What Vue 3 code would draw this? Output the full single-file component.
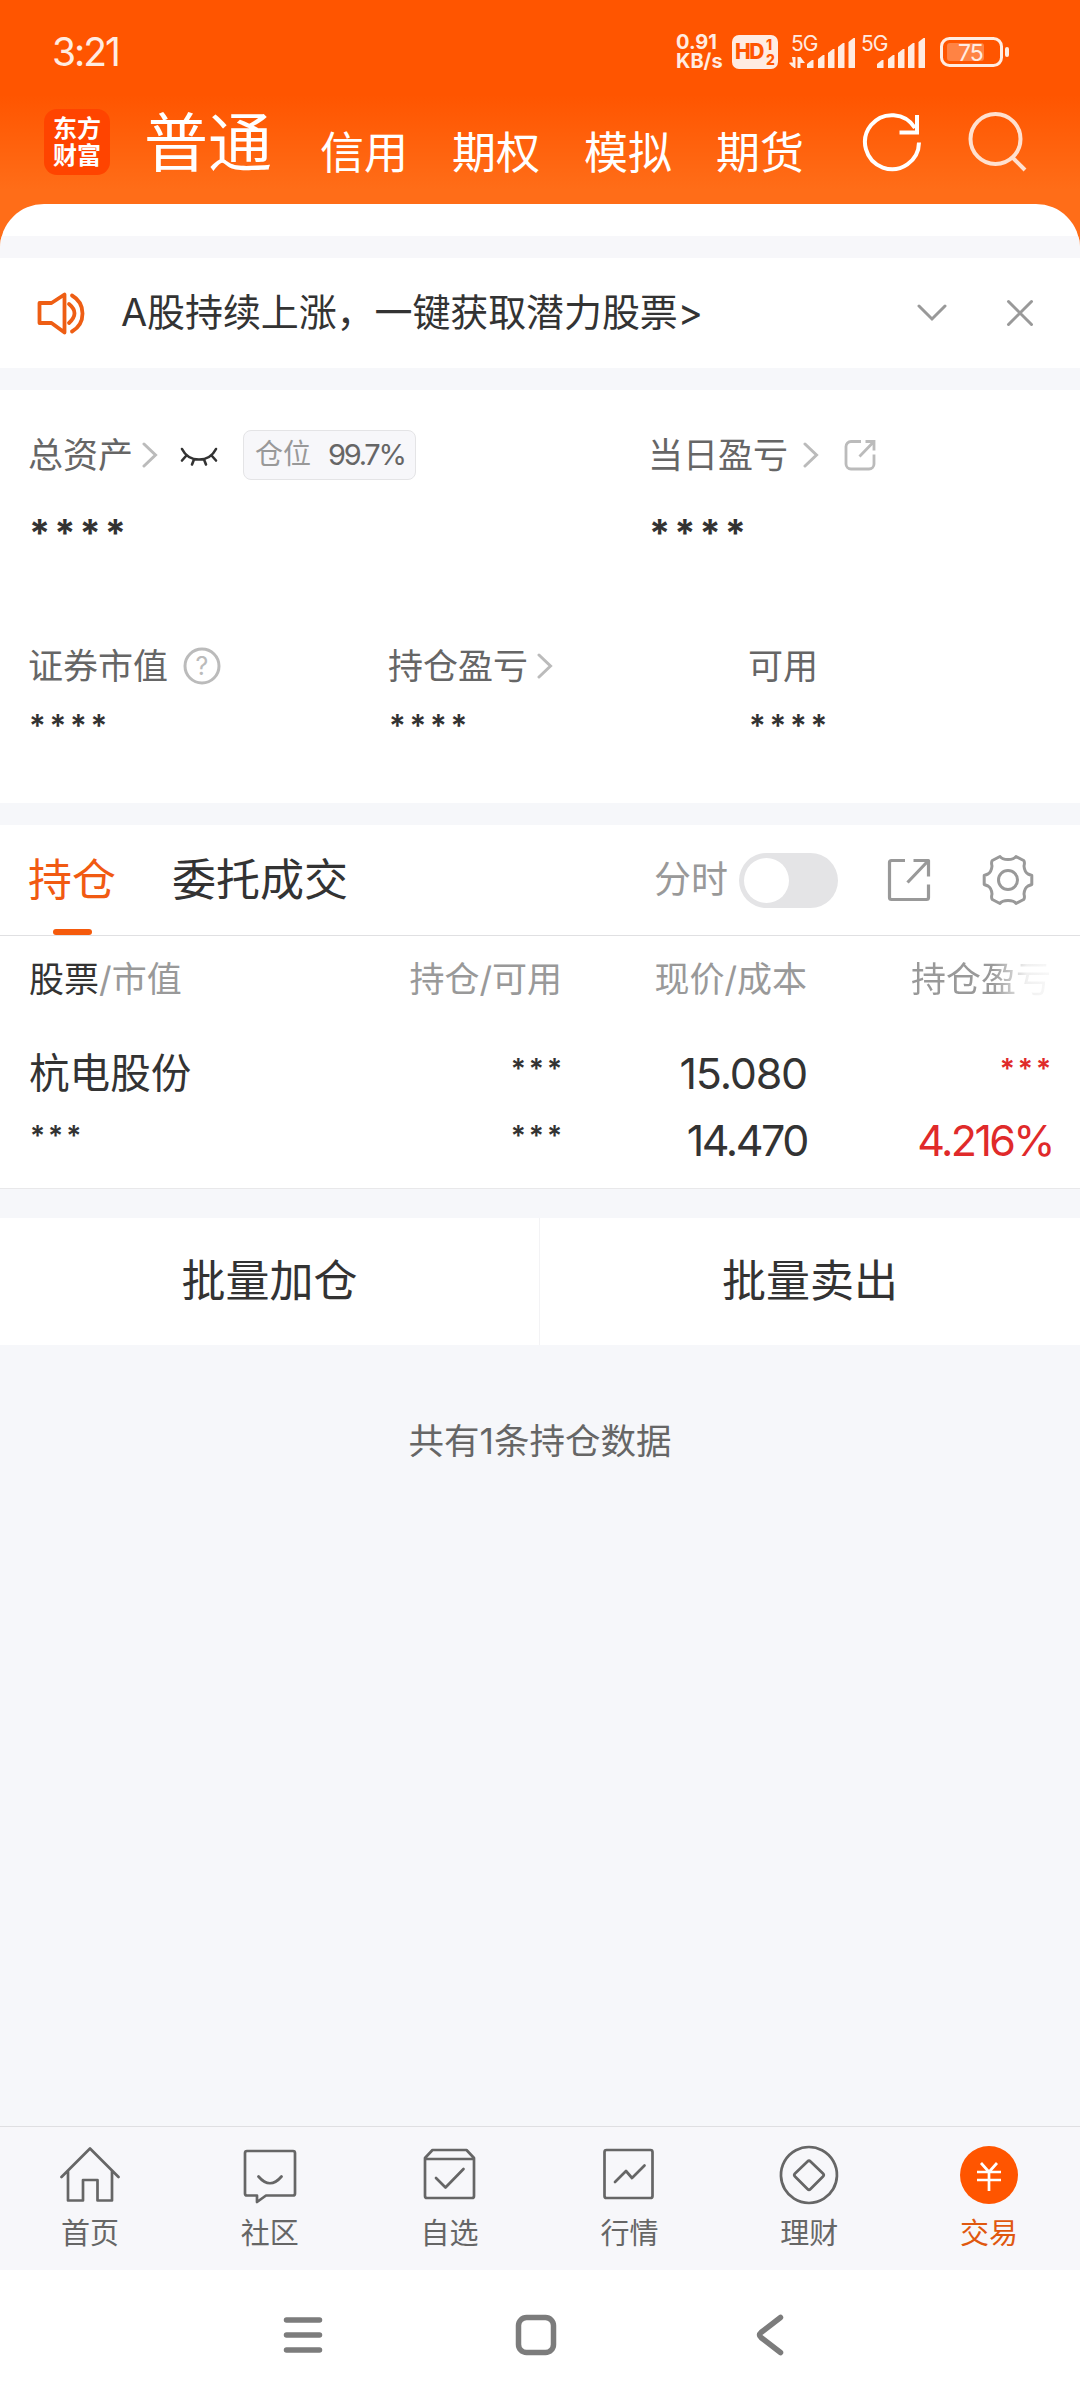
<template>
  <div class="phone">
    <header class="top">
      <div class="status">
        <span class="clock">3:21</span>
        <div class="speed">
          <span>0.91</span>
          <span>KB/s</span>
        </div>
        <div class="hd">
          <span class="hd-main">HD</span>
          <span class="hd-sub"><i>1</i><i>2</i></span>
        </div>
        <svg class="signals" width="140" height="52" viewBox="0 -8 140 52">
          <text x="2" y="17">5G</text>
          <path d="M1 28.500H5.500V34Q3 33 0 29zM3 23h3.500v11H5zM8.500 23h3L16 29H11.500V34H8.500z" />
          <path v-for="bar in bars" :key="bar.x" :d="barPath(bar.x, bar.h)" />
          <text x="72" y="17">5G</text>
          <path v-for="bar in bars" :key="bar.x" :d="barPath(bar.x + 70, bar.h)" />
        </svg>
        <svg class="battery" width="70" height="32" viewBox="0 0 70 32">
          <rect x="1.5" y="2.5" width="60" height="27" rx="8" fill="none" stroke="#ffece2" stroke-width="3" />
          <rect x="7" y="7" width="37" height="18" rx="3" fill="#ff8344" />
          <rect x="65" y="11" width="4" height="10" rx="2" fill="#ffece2" />
          <text x="18" y="24.500">75</text>
        </svg>
      </div>
      <nav class="accounts">
        <div class="logo"><span>东方</span><span>财富</span></div>
        <span class="account current">普通</span>
        <span v-for="name in accounts" :key="name" class="account">{{ name }}</span>
        <svg class="refresh" width="60" height="62" viewBox="0 0 60 62" fill="none" stroke="#fff" stroke-width="4">
          <path d="M57 31.500A27 27 0 1 1 53 17" />
          <path d="M55 4v17.500H37.500" />
        </svg>
        <svg class="search" width="62" height="62" viewBox="0 0 62 62" fill="none" stroke="#ffe0cf" stroke-width="4">
          <circle cx="28.500" cy="28" r="25" />
          <path d="M45.500 46.500L58 59" />
        </svg>
      </nav>
      <div class="sheet"><div class="sheet-gap"></div></div>
    </header>

    <section class="notice">
      <svg width="50" height="44" viewBox="0 0 50 44" fill="none" stroke="#ee5e14" stroke-width="3.800" stroke-linecap="round" stroke-linejoin="round">
        <path d="M3.500 12h12L28.500 3.500v38L15.500 32H3.500z" />
        <path d="M33 13q11 9 0 19M36 4.500c14 8 14 28 0 36" />
      </svg>
      <span class="notice-text">A股持续上涨，一键获取潜力股票&gt;</span>
      <svg class="fold" width="30" height="18" viewBox="0 0 30 18" fill="none" stroke="#999" stroke-width="3" stroke-linecap="round">
        <path d="M2 2l13 13L28 2" />
      </svg>
      <svg width="28" height="28" viewBox="0 0 28 28" fill="none" stroke="#999" stroke-width="3" stroke-linecap="round">
        <path d="M2.500 2.500l23 23M25.500 2.500l-23 23" />
      </svg>
    </section>

    <section class="assets">
      <div class="summary">
        <div class="summary-total">
          <div class="label">
            总资产
            <svg class="chevron" width="16" height="26" viewBox="0 0 16 26"><path d="M2 2l11.500 11L2 24" /></svg>
            <svg class="eye" width="38" height="20" viewBox="0 0 38 20" fill="none" stroke="#333" stroke-width="2.600" stroke-linecap="round">
              <path d="M2 2c7 14 27 14 34 0M6 9l-4 4.500M14 12.500l-2 5M24 12.500l2 5M32 9l4 4.500" />
            </svg>
            <span class="badge">仓位<b>99.7%</b></span>
          </div>
          <div class="masked big">****</div>
        </div>
        <div class="summary-day">
          <div class="label">
            当日盈亏
            <svg class="chevron wide" width="16" height="26" viewBox="0 0 16 26"><path d="M2 2l11.500 11L2 24" /></svg>
            <svg class="share" width="32" height="32" viewBox="0 0 32 32" fill="none" stroke="#bbb" stroke-width="2.800">
              <path d="M17 2.500H7a5 5 0 0 0-5 5V25a5 5 0 0 0 5 5h18a5 5 0 0 0 5-5V15.500" />
              <path d="M21.500 2.500H30v9M29.500 3L15.500 17.500" />
            </svg>
          </div>
          <div class="masked big">****</div>
        </div>
      </div>
      <div class="figures">
        <div v-for="item in figures" :key="item.label" class="figure">
          <div class="label">
            {{ item.label }}
            <svg v-if="item.mark === 'help'" class="help" width="38" height="38" viewBox="0 0 38 38">
              <circle cx="19" cy="19" r="17" fill="none" stroke="#bbb" stroke-width="3" />
              <text x="19" y="28" text-anchor="middle">?</text>
            </svg>
            <svg v-if="item.mark === 'chevron'" class="chevron" width="16" height="26" viewBox="0 0 16 26"><path d="M2 2l11.500 11L2 24" /></svg>
          </div>
          <div class="masked">****</div>
        </div>
      </div>
    </section>

    <section class="positions">
      <div class="tabs">
        <span class="tab active">持仓</span>
        <span class="tab">委托成交</span>
        <span class="tick">分时</span>
        <span class="toggle"><i></i></span>
        <svg class="export" width="44" height="44" viewBox="0 0 44 44" fill="none" stroke="#999" stroke-width="3.200">
          <path d="M18 2.500H4.500Q2.500 2.500 2.500 4.500V39.500Q2.500 41.500 4.500 41.500H39.500Q41.500 41.500 41.500 39.500V26.500" />
          <path d="M26.500 2.500h15V18.500M41 3L20.500 24.500" stroke-linejoin="round" />
        </svg>
        <svg class="gear" width="52" height="52" viewBox="0 0 52 52" fill="none" stroke="#999" stroke-width="3" stroke-linejoin="round">
          <path d="M18 2.500Q20 5.500 26 5.500T34 2.500L41.700 6.500Q43 8 42 12Q42.500 18 46 20L49.800 21.500V30.500L46 32Q42.500 34 42 40Q43 44 41.700 45.500L34 49.500Q32 46.500 26 46.500T18 49.500L10.300 45.500Q9 44 10 40Q9.500 34 6 32L2.200 30.500V21.500L6 20Q9.500 18 10 12Q9 8 10.300 6.500Z" />
          <circle cx="26" cy="26" r="9.500" />
        </svg>
      </div>
      <div class="grid grid-head">
        <span><em>股票</em>/市值</span>
        <span>持仓/可用</span>
        <span>现价/成本</span>
        <span class="fade">持仓盈亏</span>
      </div>
      <div v-for="stock in stocks" :key="stock.name" class="grid grid-row">
        <div class="cell">
          <span class="name">{{ stock.name }}</span>
          <span class="stars">***</span>
        </div>
        <div class="cell">
          <span class="stars">***</span>
          <span class="stars">***</span>
        </div>
        <div class="cell">
          <span>{{ stock.price }}</span>
          <span class="cost">{{ stock.cost }}</span>
        </div>
        <div class="cell up">
          <span class="stars">***</span>
          <span class="percent">{{ stock.profit }}</span>
        </div>
      </div>
    </section>

    <section class="batch">
      <button>批量加仓</button>
      <button>批量卖出</button>
    </section>

    <p class="count">共有{{ stocks.length }}条持仓数据</p>

    <nav class="tabbar">
      <a v-for="tab in tabbar" :key="tab.label" :class="{ on: tab.on }">
        <svg width="60" height="60" viewBox="0 0 60 60">
          <circle v-if="tab.on" cx="30" cy="30" r="29" class="disc" />
          <path :d="tab.icon" />
        </svg>
        <span>{{ tab.label }}</span>
      </a>
    </nav>

    <footer class="system">
      <svg width="40" height="42" viewBox="0 0 40 42"><path d="M3.500 6h33M3.500 21h33M3.500 36h33" /></svg>
      <svg width="42" height="42" viewBox="0 0 42 42"><rect x="3.500" y="3.500" width="35" height="35" rx="8" /></svg>
      <svg width="28" height="42" viewBox="0 0 28 42"><path d="M24.500 3.500L5 18.500Q2 21 5 23.500L24.500 38.500" /></svg>
    </footer>
  </div>
</template>

<script setup>
const accounts = ["信用", "期权", "模拟", "期货"];

const bars = [
  { x: 18, h: 8 },
  { x: 29, h: 13 },
  { x: 39, h: 19 },
  { x: 49, h: 25 },
  { x: 59.5, h: 30 },
];

const barPath = (x, h) => `M${x} 34V${38 - h}l5-4h1.500V34z`;

const figures = [
  { label: "证券市值", mark: "help" },
  { label: "持仓盈亏", mark: "chevron" },
  { label: "可用" },
];

const stocks = [
  { name: "杭电股份", price: "15.080", cost: "14.470", profit: "4.216%" },
];

const tabbar = [
  {
    label: "首页",
    icon: "M1.500 32L30 3.500L58.500 32M8 26V55.500H23V35H37.500V55.500H52V26",
  },
  {
    label: "社区",
    icon: "M7 6H53Q55 6 55 8V48.500Q55 50.500 53 50.500H26L17 57V50.500H7Q5 50.500 5 48.500V8Q5 6 7 6M18.500 31.500Q30 45 41.500 31.500",
  },
  {
    label: "自选",
    icon: "M5 13L12.500 5H46.500L54 13V51Q54 53 52 53H7Q5 53 5 51ZM5 14H54M16 33L25.500 42.500L43.500 24",
  },
  {
    label: "行情",
    icon: "M7.500 5H51.500Q53.500 5 53.500 7V51Q53.500 53 51.500 53H7.500Q5.500 53 5.500 51V7Q5.500 5 7.500 5M16 37L27 26L33 33L45.500 20.500",
  },
  {
    label: "理财",
    icon: "M30 2A28 28 0 1 1 29.900 2ZM28.500 16.500L16 28.500Q14.500 30 16 31.500L28.500 44Q30 45.500 31.500 44L44 31.500Q45.500 30 44 28.500L31.500 16.500Q30 15 28.500 16.500",
  },
  {
    label: "交易",
    icon: "M22 18L30 27L38 18M18 27H42M18 35H42M30 27V46",
    on: true,
  },
];
</script>

<style>
body {
  background: #f6f7fa;
}
</style>

<style scoped>
.phone {
  display: flex;
  flex-direction: column;
  width: 1080px;
  height: 2400px;
  background: #f6f7fa;
  color: #333;
  font-family: Inter, "Noto Sans CJK SC", sans-serif;
  line-height: 1.2;
  overflow: hidden;
}

svg {
  display: block;
  flex: none;
}

/* Header */
.top {
  height: 258px;
  background: linear-gradient(#ff5500 95px, #ff6d18 190px);
}

.status {
  display: flex;
  align-items: center;
  height: 104px;
  padding: 0 70px 0 52px;
  color: #ffece2;
}

.clock {
  flex: 1;
  font-size: 39px;
  letter-spacing: -2px;
}

.speed {
  display: flex;
  flex-direction: column;
  width: 56px;
  font-size: 20px;
  line-height: 19px;
  font-weight: 700;
}

.hd {
  display: flex;
  align-items: center;
  width: 46px;
  height: 34px;
  padding-left: 3px;
  box-sizing: border-box;
  border-radius: 7px;
  background: #ffece2;
  color: #ff5500;
  font-weight: 800;
}

.hd-main {
  width: 31px;
  font-size: 21px;
  letter-spacing: -1.5px;
}

.hd-sub {
  display: flex;
  flex-direction: column;
  font-size: 14px;
  line-height: 15px;
}

.hd-sub i {
  font-style: normal;
}

.signals {
  margin-left: 11px;
  fill: #ffece2;
  font-size: 21px;
  letter-spacing: -1px;
}

.battery {
  margin-left: 11px;
  fill: #ffece2;
  font-size: 23px;
  letter-spacing: -1px;
}

.accounts {
  display: flex;
  align-items: center;
  height: 76px;
  padding-left: 44px;
  color: #fff;
}

.logo {
  display: flex;
  flex-direction: column;
  align-items: center;
  justify-content: center;
  width: 66px;
  height: 66px;
  margin-right: 34px;
  border-radius: 13px;
  background: #ff4400;
  font-size: 24px;
  line-height: 27px;
  font-weight: 700;
}

.account {
  margin-right: 44px;
  padding-top: 22px;
  font-size: 44px;
  line-height: 54px;
}

.account.current {
  margin-right: 48px;
  padding: 2px 0 0;
  font-size: 64px;
  line-height: 76px;
}

.refresh {
  margin-left: 14px;
}

.search {
  margin-left: 45px;
}

.sheet {
  height: 54px;
  margin-top: 24px;
  padding-top: 32px;
  box-sizing: border-box;
  border-radius: 44px 44px 0 0;
  background: #fff;
  overflow: hidden;
}

.sheet-gap {
  height: 22px;
  background: #f7f7fa;
}

/* Notice */
.notice {
  display: flex;
  align-items: center;
  height: 110px;
  padding: 0 46px 0 36px;
  background: #fff;
}

.notice-text {
  flex: 1;
  margin-left: 35px;
  font-size: 38px;
  letter-spacing: -0.1px;
}

.fold {
  margin-right: 59px;
}

/* Assets */
.assets {
  height: 413px;
  margin: 22px 0;
  padding: 40px 0 0 28px;
  box-sizing: border-box;
  background: #fff;
}

.summary {
  display: flex;
}

.summary-total {
  width: 620px;
}

.label {
  display: flex;
  align-items: center;
  height: 50px;
  font-size: 35px;
  color: #666;
}

.chevron {
  margin-left: 9px;
  fill: none;
  stroke: #bbb;
  stroke-width: 3;
  stroke-linecap: round;
}

.chevron.wide {
  margin-left: 15px;
}

.eye {
  margin: 4px 25px 0 22px;
}

.badge {
  display: flex;
  align-items: center;
  width: 173px;
  height: 50px;
  padding-left: 11px;
  box-sizing: border-box;
  border: 1px solid #e4e4e6;
  border-radius: 8px;
  background: #f7f7fa;
  font-size: 28px;
  color: #999;
}

.badge b {
  margin-left: 17px;
  font-size: 29px;
  font-weight: 400;
  letter-spacing: -2.3px;
  color: #666;
}

.share {
  margin-left: 25px;
}

.masked {
  height: 40px;
  margin-top: 16px;
  padding-left: 1px;
  font-size: 31px;
  line-height: 47px;
  font-weight: 600;
  letter-spacing: 3.8px;
}

.masked.big {
  height: 50px;
  margin-top: 23px;
  font-size: 38px;
  line-height: 61px;
  font-weight: 700;
  letter-spacing: 4px;
}

.figures {
  display: flex;
  margin-top: 93px;
}

.figure {
  flex: none;
  width: 360px;
}

.figure .label {
  height: 40px;
}

.help {
  margin-left: 15px;
  fill: #bbb;
  font-size: 25px;
}

/* Positions */
.tabs {
  display: flex;
  align-items: center;
  height: 111px;
  padding: 0 46px 0 28px;
  box-sizing: border-box;
  border-bottom: 1px solid #e0e0e2;
  background: #fff;
}

.tab {
  position: relative;
  margin-right: 56px;
  font-size: 44px;
  line-height: 110px;
}

.tab.active {
  color: #f15a12;
}

.tab.active::after {
  content: "";
  position: absolute;
  left: 25px;
  bottom: 0;
  width: 39px;
  height: 6px;
  border-radius: 3px;
  background: #f55a0c;
}

.tick {
  margin-left: auto;
  font-size: 37px;
  color: #999;
}

.toggle {
  width: 99px;
  height: 55px;
  margin-left: 11px;
  padding: 5px;
  box-sizing: border-box;
  border-radius: 28px;
  background: #e4e4e6;
}

.toggle i {
  display: block;
  width: 45px;
  height: 45px;
  border-radius: 50%;
  background: #fff;
}

.export {
  margin: 0 51px 0 49px;
}

.grid {
  display: grid;
  grid-template-columns: 289px 244px 245px 244px;
  padding: 0 29px;
  background: #fff;
  text-align: right;
}

.grid > :first-child {
  text-align: left;
}

.grid-head {
  height: 86px;
  font-size: 35px;
  line-height: 87px;
  color: #999;
}

.grid-head em {
  font-style: normal;
  color: #333;
}

.fade {
  background: linear-gradient(90deg, #999 76%, #f0f0f0 90%, #f8f8f8 100%);
  background-clip: text;
  -webkit-background-clip: text;
  color: transparent;
}

.grid-row {
  height: 167px;
  padding-top: 18px;
  box-sizing: border-box;
  border-bottom: 1px solid #e8e8ea;
}

.cell span {
  display: block;
  height: 67px;
  font-size: 43px;
  line-height: 67px;
  letter-spacing: -1.2px;
}

.cell .name {
  font-size: 40.6px;
  letter-spacing: 0;
}

.cell .stars {
  margin-right: -3px;
  padding-left: 1px;
  font-size: 28px;
  line-height: 59px;
  font-weight: 600;
  letter-spacing: 3px;
}

.cell .cost {
  letter-spacing: -2.4px;
}

.cell .percent {
  margin-right: -2px;
  letter-spacing: -2.6px;
}

.up {
  color: #e02a2a;
}

/* Batch actions */
.batch {
  display: flex;
  height: 127px;
  margin-top: 29px;
  background: #fff;
}

.batch button {
  width: 539px;
  border: 0;
  padding: 0;
  background: none;
  font: inherit;
  font-size: 44px;
  color: #333;
}

.batch button + button {
  flex: 1;
  border-left: 1px solid #f3f3f5;
}

.count {
  flex: 1;
  margin: 0;
  padding-top: 72px;
  text-align: center;
  font-size: 35.5px;
  line-height: 50px;
  color: #666;
}

/* Bottom navigation */
.tabbar {
  display: flex;
  height: 144px;
  padding-right: 1px;
  box-sizing: border-box;
  border-top: 1px solid #dfdfe2;
  background: #f7f7fa;
}

.tabbar a {
  flex: 1;
  display: flex;
  flex-direction: column;
  align-items: center;
  padding-top: 18px;
  font-size: 29px;
  line-height: 36px;
  color: #666;
}

.tabbar span {
  margin-top: 11px;
}

.tabbar path {
  fill: none;
  stroke: #666;
  stroke-width: 2.7;
  stroke-linejoin: round;
  stroke-linecap: round;
}

.tabbar .on {
  color: #e0580f;
}

.tabbar .disc {
  fill: #ff5500;
}

.tabbar .on path {
  stroke: #fff;
  stroke-linecap: butt;
}

.system {
  display: flex;
  align-items: center;
  height: 130px;
  padding-left: 283px;
  background: #fff;
}

.system svg {
  fill: none;
  stroke: #7c7c7c;
  stroke-width: 5.5;
  stroke-linecap: round;
}

.system svg + svg {
  margin-left: 192px;
}

.system svg:last-child {
  margin-left: 199px;
}
</style>
